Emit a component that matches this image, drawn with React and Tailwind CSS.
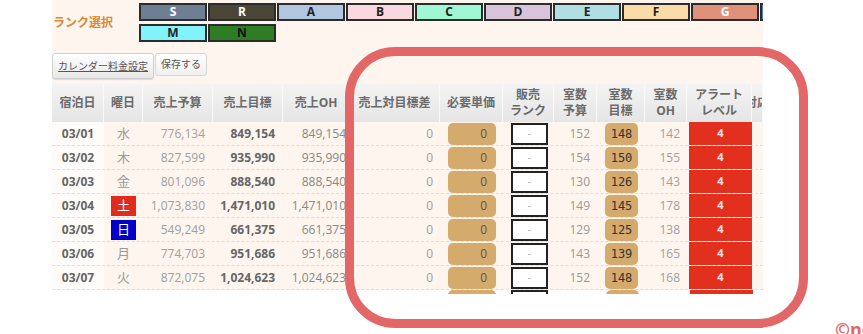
import React from "react";

// ─── Data ─────────────────────────────────────────────────────────────────────
const RANKS_TOP = [
  { k: "S", bg: "bg-[#6f7f93]", fg: "text-white" },
  { k: "R", bg: "bg-[#4b4535]", fg: "text-white" },
  { k: "A", bg: "bg-[#b3c6e0]", fg: "text-[#222]" },
  { k: "B", bg: "bg-[#f9d9df]", fg: "text-[#222]" },
  { k: "C", bg: "bg-[#9ff7d3]", fg: "text-[#222]" },
  { k: "D", bg: "bg-[#d8c3db]", fg: "text-[#222]" },
  { k: "E", bg: "bg-[#b1dde5]", fg: "text-[#222]" },
  { k: "F", bg: "bg-[#f9dcaa]", fg: "text-[#222]" },
  { k: "G", bg: "bg-[#e0917b]", fg: "text-white" },
  { k: "H", bg: "bg-[#4f7fc8]", fg: "text-white" },
];
const RANKS_BOTTOM = [
  { k: "M", bg: "bg-[#80f3fb]", fg: "text-[#222]" },
  { k: "N", bg: "bg-[#2f7d22]", fg: "text-[#111]" },
];

const W = [52, 39, 70, 70, 67, 90, 63, 51, 43, 48, 42, 65, 11];

const HEAD = [
  ["宿泊日"],
  ["曜日"],
  ["売上予算"],
  ["売上目標"],
  ["売上OH"],
  ["売上対目標差"],
  ["必要単価"],
  ["販売", "ランク"],
  ["室数", "予算"],
  ["室数", "目標"],
  ["室数", "OH"],
  ["アラート", "レベル"],
  ["対応"],
];

const ROWS = [
  ["03/01", "水", "776,134", "849,154", "849,154", "152", "148", "142"],
  ["03/02", "木", "827,599", "935,990", "935,990", "154", "150", "155"],
  ["03/03", "金", "801,096", "888,540", "888,540", "130", "126", "143"],
  ["03/04", "土", "1,073,830", "1,471,010", "1,471,010", "149", "145", "178"],
  ["03/05", "日", "549,249", "661,375", "661,375", "129", "125", "138"],
  ["03/06", "月", "774,703", "951,686", "951,686", "143", "139", "165"],
  ["03/07", "火", "872,075", "1,024,623", "1,024,623", "152", "148", "168"],
];

// ─── Rank chip ────────────────────────────────────────────────────────────────
function Rank({ k, bg, fg }) {
  return (
    <div
      className={`w-[68px] h-[18px] shrink-0 border-2 border-[#2b2b2b] flex items-center justify-center text-[12px] font-bold leading-none ${bg} ${fg}`}
    >
      {k}
    </div>
  );
}

// ─── Day cell ─────────────────────────────────────────────────────────────────
function Day({ d }) {
  if (d === "土")
    return (
      <span className="w-[25px] h-[20px] bg-[#e12b1d] text-white flex items-center justify-center text-[13px]">
        {d}
      </span>
    );
  if (d === "日")
    return (
      <span className="w-[25px] h-[20px] bg-[#0000c8] text-white flex items-center justify-center text-[13px]">
        {d}
      </span>
    );
  return <span className="text-[13px] text-[#9a9a9a]">{d}</span>;
}

// ─── Body row ─────────────────────────────────────────────────────────────────
function Row({ r }) {
  const [date, day, bud, tgt, oh, rb, rt, roh] = r;
  return (
    <div className="flex h-[24px] border-b border-dashed border-[#e6dcd2] text-[12px]">
      <div className="w-[52px] shrink-0 bg-[#fefbf8] flex items-center justify-center font-bold text-[#666]">
        {date}
      </div>
      <div className="w-[39px] shrink-0 flex items-center justify-center">
        <Day d={day} />
      </div>
      <div className="w-[70px] shrink-0 flex items-center justify-end pr-[8px] text-[#a0a0a0]">{bud}</div>
      <div className="w-[70px] shrink-0 flex items-center justify-end pr-[8px] font-bold text-[#666]">{tgt}</div>
      <div className="w-[67px] shrink-0 flex items-center justify-end pr-[4px] text-[#888]">{oh}</div>
      <div className="w-[90px] shrink-0 flex items-center justify-end pr-[7px] text-[#a0a0a0]">0</div>
      <div className="w-[63px] shrink-0 flex items-center pl-[8px]">
        <div className="w-[48px] h-[22px] rounded-[5px] bg-[#d5aa6d] flex items-center justify-end pr-[9px] text-[#555]">
          0
        </div>
      </div>
      <div className="w-[51px] shrink-0 flex items-center pl-[8px]">
        <div className="w-[37px] h-[22px] border-2 border-[#222] bg-white flex items-center justify-center text-[#aaa] text-[11px]">
          -
        </div>
      </div>
      <div className="w-[43px] shrink-0 flex items-center justify-end pr-[7px] text-[#999]">{rb}</div>
      <div className="w-[48px] shrink-0 flex items-center pl-[8px]">
        <div className="w-[33px] h-[22px] rounded-[5px] bg-[#d5aa6d] flex items-center justify-center font-['DejaVu_Sans_Mono',monospace] text-[12px] text-[#333]">
          {rt}
        </div>
      </div>
      <div className="w-[42px] shrink-0 flex items-center justify-end pr-[7px] text-[#a0a0a0]">{roh}</div>
      <div className="w-[63px] shrink-0 ml-[2px] bg-[#e2301f] flex items-center justify-center text-[11px] font-bold text-[#fbe4e0]">
        4
      </div>
      <div className="w-[11px] shrink-0" />
    </div>
  );
}

// ─── Main ─────────────────────────────────────────────────────────────────────
export default function App() {
  return (
    <div className="relative w-[863px] h-[334px] overflow-hidden bg-white font-['Open_Sans','Noto_Sans_CJK_JP',sans-serif]">
      <div className="ml-[52px] w-[711px] overflow-hidden bg-[#fdf5ee]">
        {/* ── Rank select ── */}
        <div className="flex pt-[3px]">
          <div className="w-[87px] shrink-0 flex items-center pl-[1px] text-[12px] font-bold text-[#d98a3a]">
            ランク選択
          </div>
          <div className="flex flex-col gap-[3px]">
            <div className="flex gap-px">
              {RANKS_TOP.map((r) => (
                <Rank key={r.k} {...r} />
              ))}
            </div>
            <div className="flex gap-px">
              {RANKS_BOTTOM.map((r) => (
                <Rank key={r.k} {...r} />
              ))}
            </div>
          </div>
        </div>

        {/* ── Buttons ── */}
        <div className="flex items-start mt-[11px]">
          <button className="h-[26px] w-[102px] border border-[#cfcfcf] rounded-[3px] bg-linear-to-b from-white to-[#e8e8e8] text-[10px] text-[#555] underline shadow-[0_1px_1px_rgba(0,0,0,0.12)]">
            カレンダー料金設定
          </button>
          <button className="h-[23px] w-[52px] ml-px border border-[#d6d6d6] rounded-[3px] bg-linear-to-b from-white to-[#f0f0f0] text-[10px] text-[#555]">
            保存する
          </button>
        </div>

        {/* ── Table header ── */}
        <div className="flex h-[38px] mt-[5px] bg-linear-to-b from-[#f4f4f4] to-[#e5e5e5] text-[12px] font-bold text-[#6a6a6a] leading-[16px]">
          {HEAD.map((h, i) => (
            <div
              key={i}
              style={{ width: W[i] }}
              className="shrink-0 border-r border-[#f9f9f9] flex flex-col items-center justify-center overflow-hidden whitespace-nowrap"
            >
              {h.map((t) => (
                <span key={t}>{t}</span>
              ))}
            </div>
          ))}
        </div>

        {/* ── Rows ── */}
        {ROWS.map((r) => (
          <Row key={r[0]} r={r} />
        ))}

        {/* partial next row */}
        <div className="flex h-[4px] overflow-hidden bg-white">
          <div className="w-[396px] shrink-0" />
          <div className="w-[48px] h-[22px] rounded-[5px] bg-[#d5aa6d]" />
          <div className="w-[15px] shrink-0" />
          <div className="w-[37px] h-[22px] border-2 border-[#222]" />
          <div className="w-[58px] shrink-0" />
          <div className="w-[33px] h-[22px] rounded-[5px] bg-[#d5aa6d]" />
          <div className="w-[51px] shrink-0" />
          <div className="w-[63px] h-[22px] bg-[#e2301f]" />
        </div>
      </div>

      {/* ── Annotation overlay ── */}
      <div className="absolute left-[345px] top-[47px] w-[463px] h-[281px] border-[9px] border-[#e36767] rounded-[50px] pointer-events-none" />

      <div className="absolute left-[835px] top-[320px] text-[18px] font-bold text-[#e36767] leading-none">
        ©ne
      </div>
    </div>
  );
}
